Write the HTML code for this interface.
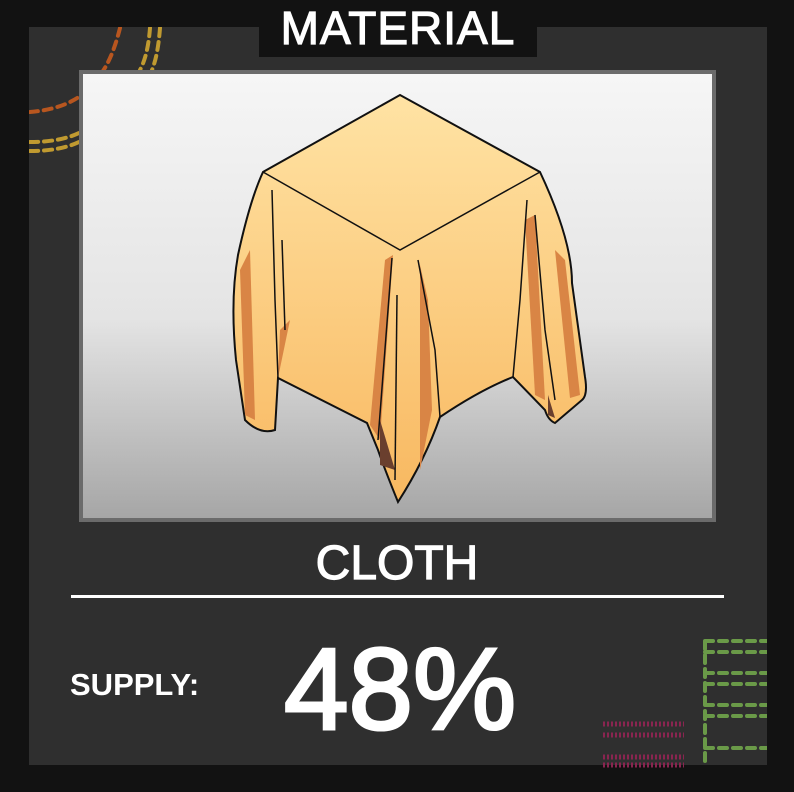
<!DOCTYPE html>
<html><head><meta charset="utf-8"><style>
html,body{margin:0;padding:0;background:#121212;width:794px;height:792px;overflow:hidden;font-family:"Liberation Sans",sans-serif}
.panel{position:absolute;left:29px;top:27px;width:738px;height:738px;background:#2f2f2f}
.title{position:absolute;left:259px;top:0;width:278px;height:57px;background:#121212;color:#fff;font-size:46px;text-align:center;line-height:56px;letter-spacing:1px;-webkit-text-stroke:1.2px #fff}
.frame{position:absolute;left:79px;top:70px;width:629px;height:444px;border:4px solid #6b6b6b;background:linear-gradient(#f6f6f6 0%,#e4e4e4 55%,#a6a6a6 100%)}
.cloth{position:absolute;left:0;top:535px;width:794px;text-align:center;color:#fff;font-size:48px;line-height:58px;-webkit-text-stroke:1.2px #fff}
.line{position:absolute;left:71px;top:595px;width:653px;height:3px;background:#fff}
.sup{position:absolute;left:70px;top:667px;color:#fff;font-size:31px;font-weight:bold}
.pct{position:absolute;left:284px;top:630px;color:#fff;font-size:116px;line-height:118px;-webkit-text-stroke:3px #fff}
</style></head><body>
<div class="panel"></div>
<svg style="position:absolute;left:0;top:0" width="794" height="792">
<defs><clipPath id="c"><rect x="29" y="27" width="738" height="738"/></clipPath></defs>
<g fill="none" stroke-width="4" stroke-dasharray="8 6" stroke-linecap="round" clip-path="url(#c)">
<path d="M120,28 Q112,60 100,75 Q80,108 30,112" stroke="#b8561f"/>
<path d="M150,28 Q148,55 140,70" stroke="#c09a30"/>
<path d="M160,28 Q158,55 152,70" stroke="#c09a30"/>
<path d="M30,142 Q60,142 79,133" stroke="#c09a30"/>
<path d="M30,151 Q60,151 79,142" stroke="#c09a30"/>
<path d="M705,641 H767 M705,652 H767 M705,673 H767 M705,684 H767 M705,705 H767 M705,716 H767 M705,748 H767 M705,641 V765" stroke="#6a9a48"/>
</g>
<g fill="none" stroke="#8a2550" stroke-width="5" stroke-dasharray="2 2">
<path d="M603,724 H684 M603,735 H684 M603,757 H684 M603,765 H684"/>
</g>
</svg>
<div class="title">MATERIAL</div>
<div class="frame"></div>
<svg style="position:absolute;left:0;top:0" width="794" height="792">
<defs><linearGradient id="g" x1="0" y1="0" x2="0" y2="1"><stop offset="0" stop-color="#ffe3a4"/><stop offset="1" stop-color="#f8b860"/></linearGradient></defs>
<path d="M400,95 L540,172 Q572,240 572,283 L585,377 Q588,395 582,400 L555,423 Q548,420 545,410 L513,377 Q480,390 440,417 Q425,460 398,502 Q385,470 378,450 L367,423 L278,378 L275,430 Q260,435 245,420 L236,360 Q230,300 238,255 Q250,200 263,172 Z" fill="url(#g)" stroke="#111" stroke-width="2"/>
<g fill="#d98545">
<path d="M240,270 L250,250 L255,420 L245,415 Z"/><path d="M280,330 L290,320 L278,378 Z"/>
<path d="M385,260 L393,255 L380,440 L370,425 Z"/><path d="M420,265 L428,300 L432,410 L420,470 Z"/>
<path d="M525,220 L535,215 L545,400 L535,395 Z"/><path d="M555,250 L565,260 L580,395 L570,398 Z"/>
<path d="M380,420 L395,470 L380,465 Z" fill="#6a3f2e"/><path d="M548,395 L555,418 L548,415 Z" fill="#6a3f2e"/>
</g>
<g fill="none" stroke="#111" stroke-width="1.5">
<path d="M263,172 L400,250 L540,172"/>
<path d="M272,190 L275,300 L278,378"/><path d="M282,240 L285,330"/>
<path d="M392,258 L378,440"/><path d="M397,295 L395,480"/>
<path d="M418,260 L435,350 L440,417"/>
<path d="M527,200 L520,300 L513,377"/><path d="M535,215 L545,330 L555,400"/>
</g>
</svg>
<div class="cloth">CLOTH</div>
<div class="line"></div>
<div class="sup">SUPPLY:</div>
<div class="pct">48%</div>
</body></html>
